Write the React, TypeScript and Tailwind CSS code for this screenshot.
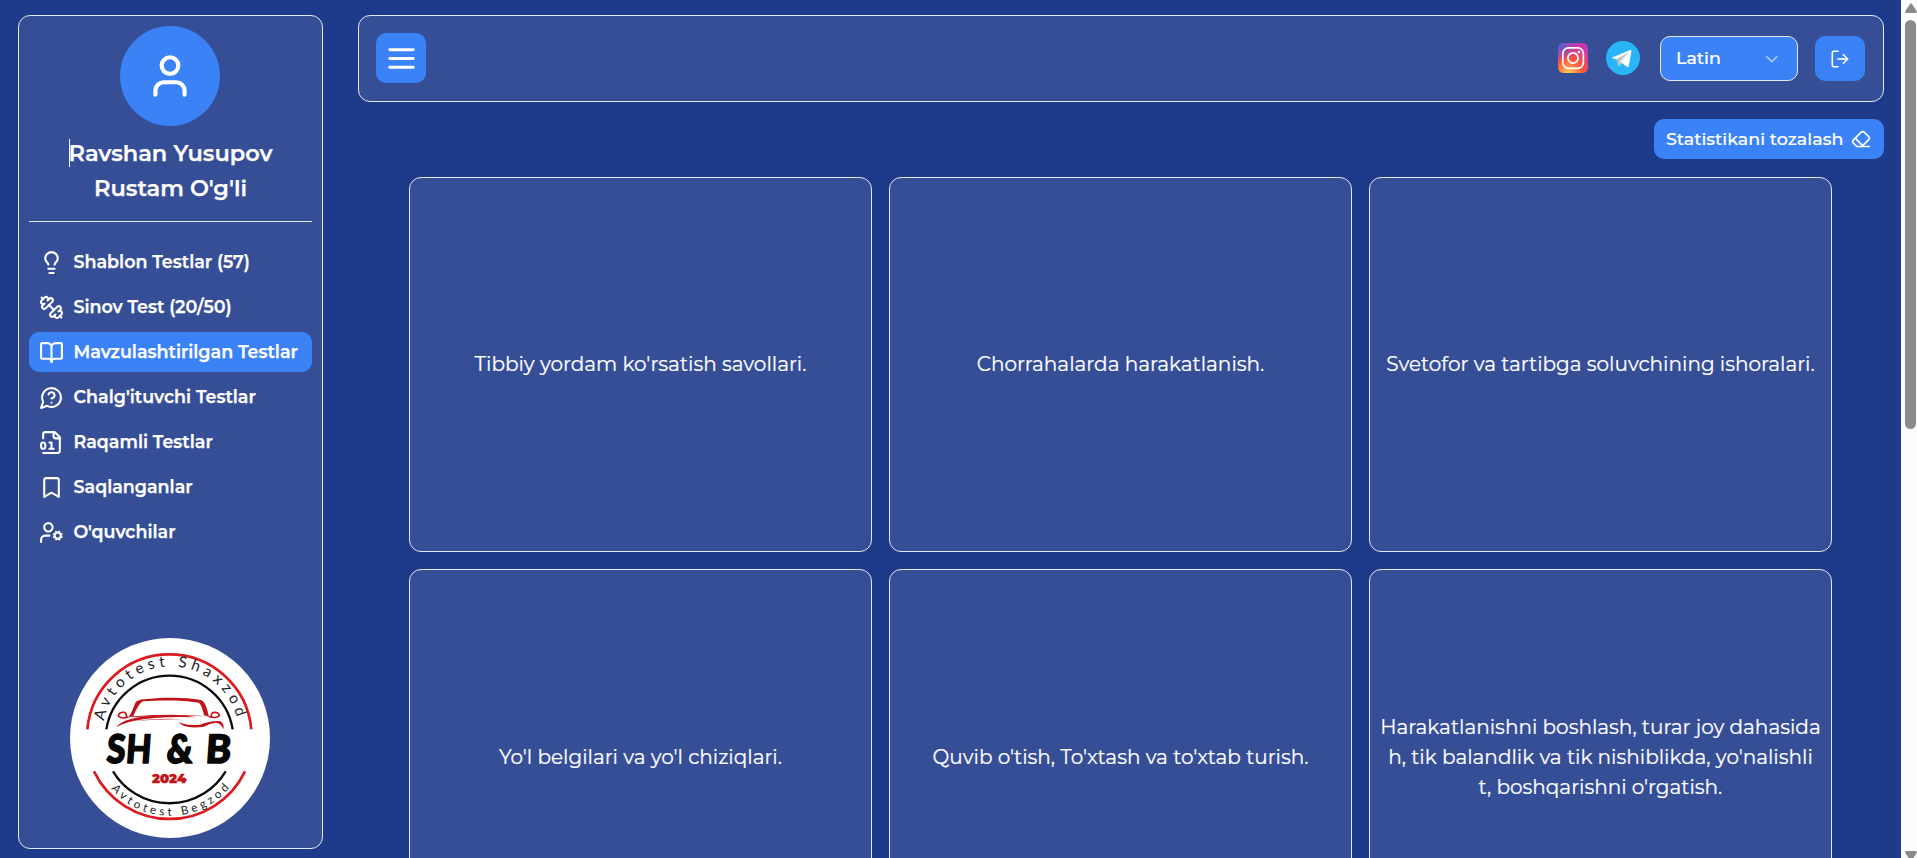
import React from 'react';
import type { ReactNode } from 'react';

function Icon({ children, className }: { children: ReactNode; className: string }) {
  return (
    <svg
      viewBox="0 0 24 24"
      fill="none"
      stroke="currentColor"
      strokeWidth={2}
      strokeLinecap="round"
      strokeLinejoin="round"
      className={className}
    >
      {children}
    </svg>
  );
}

const navItems: { label: string; active?: boolean; icon: ReactNode }[] = [
  {
    label: 'Shablon Testlar (57)',
    icon: (
      <>
        <path d="M15 14c.2-1 .7-1.7 1.5-2.5 1-.9 1.5-2.2 1.5-3.5A6 6 0 0 0 6 8c0 1 .2 2.2 1.5 3.5.7.7 1.3 1.5 1.5 2.5" />
        <path d="M9 18h6" />
        <path d="M10 22h4" />
      </>
    ),
  },
  {
    label: 'Sinov Test (20/50)',
    icon: (
      <>
        <path d="M14.4 14.4 9.6 9.6" />
        <path d="M18.657 21.485a2 2 0 1 1-2.829-2.828l-1.767 1.768a2 2 0 1 1-2.829-2.829l6.364-6.364a2 2 0 1 1 2.829 2.829l-1.768 1.767a2 2 0 1 1 2.828 2.829z" />
        <path d="m21.5 21.5-1.4-1.4" />
        <path d="M3.9 3.9 2.5 2.5" />
        <path d="M6.404 12.768a2 2 0 1 1-2.829-2.829l1.768-1.767a2 2 0 1 1-2.828-2.829l2.828-2.828a2 2 0 1 1 2.829 2.828l1.767-1.768a2 2 0 1 1 2.829 2.829z" />
      </>
    ),
  },
  {
    label: 'Mavzulashtirilgan Testlar',
    active: true,
    icon: (
      <>
        <path d="M12 7v14" />
        <path d="M3 18a1 1 0 0 1-1-1V4a1 1 0 0 1 1-1h5a4 4 0 0 1 4 4 4 4 0 0 1 4-4h5a1 1 0 0 1 1 1v13a1 1 0 0 1-1 1h-6a3 3 0 0 0-3 3 3 3 0 0 0-3-3z" />
      </>
    ),
  },
  {
    label: "Chalg'ituvchi Testlar",
    icon: (
      <>
        <path d="M7.9 20A9 9 0 1 0 4 16.1L2 22Z" />
        <path d="M9.09 9a3 3 0 0 1 5.83 1c0 2-3 3-3 3" />
        <path d="M12 17h.01" />
      </>
    ),
  },
  {
    label: 'Raqamli Testlar',
    icon: (
      <>
        <path d="M4 22h14a2 2 0 0 0 2-2V7l-5-5H6a2 2 0 0 0-2 2v4" />
        <path d="M14 2v4a2 2 0 0 0 2 2h4" />
        <rect width="4" height="6" x="2" y="12" rx="2" />
        <path d="M10 12h2v6" />
        <path d="M10 18h4" />
      </>
    ),
  },
  {
    label: 'Saqlanganlar',
    icon: <path d="m19 21-7-4-7 4V5a2 2 0 0 1 2-2h10a2 2 0 0 1 2 2v16z" />,
  },
  {
    label: "O'quvchilar",
    icon: (
      <>
        <circle cx="18" cy="15" r="3" />
        <circle cx="9" cy="7" r="4" />
        <path d="M10 15H6a4 4 0 0 0-4 4v2" />
        <path d="m21.7 16.4-.9-.3" />
        <path d="m15.2 13.9-.9-.3" />
        <path d="m16.6 18.7.3-.9" />
        <path d="m19.1 12.2.3-.9" />
        <path d="m19.6 18.7-.4-1" />
        <path d="m16.8 12.3-.4-1" />
        <path d="m14.3 16.6 1-.4" />
        <path d="m20.7 13.8 1-.4" />
      </>
    ),
  },
];

const topics = [
  "Tibbiy yordam ko'rsatish savollari.",
  'Chorrahalarda harakatlanish.',
  'Svetofor va tartibga soluvchining ishoralari.',
  "Yo'l belgilari va yo'l chiziqlari.",
  "Quvib o'tish, To'xtash va to'xtab turish.",
  "Harakatlanishni boshlash, turar joy dahasida\nh, tik balandlik va tik nishiblikda, yo'nalishli\nt, boshqarishni o'rgatish.",
];

function Logo() {
  return (
    <svg viewBox="60 54 600 600" className="mr-px size-[200px] shrink-0">
      <defs>
        <path id="arc-top" d="M162 303A204 204 0 0 1 562 303" />
        <path id="arc-bottom" d="M183 506A232 232 0 0 0 541 500" />
      </defs>
      <circle cx="360" cy="354" r="300" fill="#fff" />
      <g fill="none" strokeWidth="8">
        <path d="M112 328A247 247 0 0 1 604 328" stroke="#dc1a1f" />
        <path d="M132 454A251 251 0 0 0 585 454" stroke="#dc1a1f" />
        <g stroke="#0b0b0b" strokeWidth="7">
          <path d="M169 328A192 192 0 0 1 548 328" />
          <path d="M189 454A197 197 0 0 0 527 454" />
        </g>
      </g>
      <g fill="#222" fontFamily="Lato, sans-serif">
        <text fontSize="46">
          <textPath href="#arc-top" textLength="548">
            Avtotest Shaxzod
          </textPath>
        </text>
        <text fontSize="35">
          <textPath href="#arc-bottom" textLength="404">
            Avtotest Begzod
          </textPath>
        </text>
      </g>
      <g fill="#c01419">
        <path d="M236 292C244 280 250 262 256 248C262 240 274 238 290 237C350 231 410 232 452 240C466 245 470 262 477 290L462 286C458 268 454 254 446 248C400 240 330 240 280 244C268 248 258 270 250 289Z" />
        <path d="M250 289Q360 279 474 289Q360 284 236 292Z" />
        <path d="M198 322Q222 290 330 285Q400 283 440 292Q320 288 250 303Q218 310 198 322Z" />
        <path d="M250 303Q350 292 400 298Q320 297 250 303Z" />
        <path d="M386 306Q410 318 450 314Q490 299 512 304Q524 314 520 328Q514 310 498 308Q480 310 462 320Q400 328 386 306Z" />
      </g>
      <g fill="none" stroke="#c01419" strokeWidth="5">
        <path d="M236 291Q214 298 205 288Q206 275 224 277Q231 282 229 291" />
        <path d="M477 290Q500 296 508 287Q506 274 488 278Q482 283 484 290" />
      </g>
      <g
        fill="#070707"
        stroke="#070707"
        strokeWidth="5"
        strokeLinejoin="round"
        fontFamily="Lato, sans-serif"
        fontWeight="900"
        fontSize="118"
        transform="translate(360 429) skewX(-4)"
      >
        <text x="-192" y="0" textLength="56" lengthAdjust="spacingAndGlyphs">S</text>
        <text x="-134" y="0" textLength="76" lengthAdjust="spacingAndGlyphs">H</text>
        <text x="-12" y="0" textLength="78" lengthAdjust="spacingAndGlyphs">&amp;</text>
        <text x="105" y="0" textLength="76" lengthAdjust="spacingAndGlyphs">B</text>
      </g>
      <text
        x="306"
        y="488"
        textLength="103"
        lengthAdjust="spacingAndGlyphs"
        fill="#c01419"
        stroke="#c01419"
        strokeWidth="1"
        fontFamily="Montserrat, Inter, sans-serif"
        fontWeight="900"
        fontSize="36"
      >
        2024
      </text>
    </svg>
  );
}

function Sidebar() {
  return (
    <aside className="flex h-[834px] w-[305px] shrink-0 flex-col items-center rounded-[12px] border border-[#e5e7eb] bg-[#364e96] px-2.5 pt-2.5 pb-2.5 [-webkit-text-stroke:0.25px]">
      <div className="mr-px flex size-[100px] shrink-0 items-center justify-center rounded-full bg-[#3b82f6]">
        <Icon className="size-[50px]">
          <path d="M19 21v-2a4 4 0 0 0-4-4H9a4 4 0 0 0-4 4v2" />
          <circle cx="12" cy="7" r="4" />
        </Icon>
      </div>
      <h1 className="mt-2.5 text-center text-[22.5px] leading-[35px] font-semibold">
        <span className="relative">
          <span className="absolute top-0 left-0 h-7 w-px bg-white" />
          Ravshan Yusupov
        </span>
        <br />
        Rustam O'g'li
      </h1>
      <div className="mt-[15px] h-px w-full shrink-0 bg-[#e5e7eb]" />
      <nav className="mt-5 flex w-full flex-col gap-[5px]">
        {navItems.map((item) => (
          <a
            key={item.label}
            className={
              item.active
                ? 'flex h-10 items-center gap-[9.5px] rounded-[10px] bg-[#3b82f6] px-2.5 text-[17.5px] font-semibold whitespace-nowrap'
                : 'flex h-10 items-center gap-[9.5px] rounded-[10px] px-2.5 text-[17.5px] font-semibold whitespace-nowrap'
            }
          >
            <Icon className="size-[25px] shrink-0">{item.icon}</Icon>
            {item.label}
          </a>
        ))}
      </nav>
      <div className="mt-auto flex [-webkit-text-stroke:0]">
        <Logo />
      </div>
    </aside>
  );
}

function InstagramIcon() {
  return (
    <svg viewBox="0 0 30 30" className="mb-px size-[30px]">
      <defs>
        <radialGradient id="ig-warm" cx="0.36" cy="1.03" r="0.95">
          <stop offset="0" stopColor="#ffdd55" />
          <stop offset="0.28" stopColor="#ff8a45" />
          <stop offset="0.52" stopColor="#ff543e" />
          <stop offset="1" stopColor="#c837ab" />
        </radialGradient>
        <radialGradient id="ig-cool" cx="0.02" cy="0" r="0.65">
          <stop offset="0" stopColor="#4168c9" />
          <stop offset="0.3" stopColor="#5a5fca" stopOpacity="0.85" />
          <stop offset="1" stopColor="#a03cc0" stopOpacity="0" />
        </radialGradient>
      </defs>
      <rect width="30" height="30" rx="5.5" fill="url(#ig-warm)" />
      <rect width="30" height="30" rx="5.5" fill="url(#ig-cool)" />
      <rect x="4.8" y="4.8" width="20.6" height="20.6" rx="5.8" fill="none" stroke="#fff" strokeWidth="1.7" />
      <circle cx="15" cy="15" r="5.1" fill="none" stroke="#fff" strokeWidth="1.7" />
      <circle cx="21" cy="9" r="1.3" fill="#fff" />
    </svg>
  );
}

function TelegramIcon() {
  return (
    <svg viewBox="0 0 34 34" className="mb-px size-[34px]">
      <circle cx="17" cy="17" r="17" fill="#29b6f6" />
      <path d="M5.5 16.8 23.8 9.2Q25.6 8.5 25.4 10.2L22.8 24.8Q22.4 26.8 20.6 25.6L12.2 19.3Z" fill="#fff" />
      <path d="M10.4 18.3 12.4 25.2Q13 25.2 13.6 24.7L16 22.2 13.4 20.2 22.6 11.4Z" fill="#b0bec5" />
      <path d="M12.4 25.2 13.5 20.2 22.6 11.4 14.8 21.3Z" fill="#cfd8dc" />
    </svg>
  );
}

function Header() {
  return (
    <header className="flex h-[87px] shrink-0 items-center justify-between rounded-[12px] border border-[#e5e7eb] bg-[#364e96] pr-[18px] pl-[17px]">
      <button className="mb-px flex size-[50px] items-center justify-center rounded-[10px] bg-[#3b82f6]">
        <Icon className="size-[35px]">
          <path d="M4 6h16" />
          <path d="M4 12h16" />
          <path d="M4 18h16" />
        </Icon>
      </button>
      <div className="flex items-center">
        <InstagramIcon />
        <div className="mr-5 ml-[18px]">
          <TelegramIcon />
        </div>
        <button className="mr-[17px] flex h-[45px] w-[138px] items-center justify-between rounded-[10px] border border-[#e5e7eb] bg-[#3b82f6] pr-[18px] pl-[15px] text-[17.5px] font-medium">
          Latin
          <svg viewBox="0 0 14 8" fill="none" stroke="#fff" strokeOpacity="0.6" strokeWidth="1.5" className="h-2 w-3.5">
            <path d="m1.3 1.2 5.5 5.4 5.5-5.4" />
          </svg>
        </button>
        <button className="flex h-[45px] w-[50px] items-center justify-center rounded-[10px] bg-[#3b82f6]">
          <svg
            viewBox="0 0 18 18"
            fill="none"
            stroke="#fff"
            strokeWidth="1.6"
            strokeLinejoin="round"
            className="size-[18px]"
          >
            <path d="M7.5 1.3H2.8Q1.3 1.3 1.3 2.8V15.2Q1.3 16.7 2.8 16.7H7.5" />
            <path d="M6.3 9H16.6" />
            <path d="M11.9 4.2 16.7 9 11.9 13.8" />
          </svg>
        </button>
      </div>
    </header>
  );
}

function Scrollbar() {
  return (
    <div className="flex h-full w-4 shrink-0 flex-col items-start bg-[#fcfcfc] pl-1">
      <svg viewBox="0 0 12 10" className="mt-[3px] h-2.5 w-3 shrink-0" fill="#8b8b8b">
        <path d="M5 .9Q6 -.3 7 .9L11.7 8Q12.3 10 10.5 10H1.5Q-.3 10 .3 8Z" />
      </svg>
      <div className="mt-[7px] h-[409px] w-[11px] shrink-0 rounded-full bg-[#8b8b8b]" />
      <svg viewBox="0 0 12 10" className="mt-auto -mb-[3px] h-2.5 w-3 shrink-0" fill="#8b8b8b">
        <path d="M5 9.1Q6 10.3 7 9.1L11.7 2Q12.3 0 10.5 0H1.5Q-.3 0 .3 2Z" />
      </svg>
    </div>
  );
}

export default function App() {
  return (
    <div className="flex h-[858px] w-full overflow-hidden bg-[#1e3a8a] font-[Montserrat,Inter,sans-serif] text-white">
      <div className="flex min-w-0 flex-1 gap-[35px] pt-[15px] pr-[17px] pl-[18px]">
        <Sidebar />
        <main className="flex min-w-0 flex-1 flex-col [-webkit-text-stroke:0.2px]">
          <Header />
          <div className="mt-[17px] flex shrink-0 justify-end">
            <button className="flex h-10 w-[230px] items-center justify-between rounded-[10px] bg-[#3b82f6] pr-[13px] pl-3 text-[17.5px] font-medium whitespace-nowrap">
              Statistikani tozalash
              <Icon className="size-5 shrink-0">
                <path d="m7 21-4.3-4.3c-1-1-1-2.5 0-3.4l9.6-9.6c1-1 2.5-1 3.4 0l5.6 5.6c1 1 1 2.5 0 3.4L13 21" />
                <path d="M22 21H7" />
                <path d="m5 11 9 9" />
              </Icon>
            </button>
          </div>
          <div className="mt-[18px] mr-[52px] ml-[51px] grid auto-rows-[375px] grid-cols-3 gap-[17px]">
            {topics.map((topic, index) => (
              <div
                key={topic}
                className={
                  index < 3
                    ? 'flex items-center justify-center rounded-[12px] border border-[#e5e7eb] bg-[#364e96] px-[9px] pb-px text-center text-[20px] leading-[30px]'
                    : 'flex items-center justify-center rounded-[12px] border border-[#e5e7eb] bg-[#364e96] px-[9px] text-center text-[20px] leading-[30px] whitespace-pre-line'
                }
              >
                {topic}
              </div>
            ))}
          </div>
        </main>
      </div>
      <Scrollbar />
    </div>
  );
}
